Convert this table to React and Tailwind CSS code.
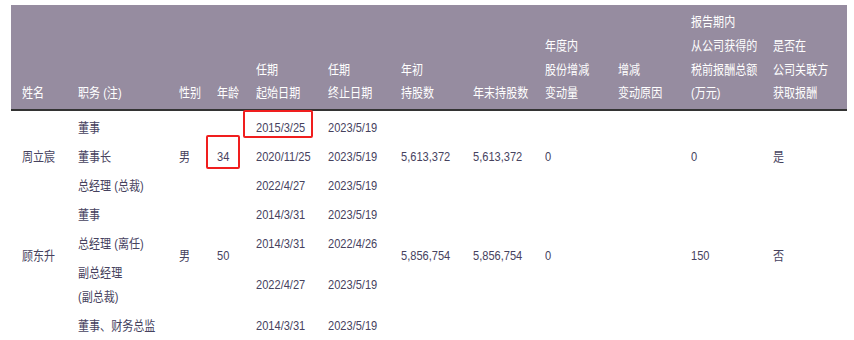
const cols = [67, 101, 38, 39, 72, 73, 72, 72, 73, 73, 82, 74]

const headers = [
  ['姓名'],
  ['职务 (注)'],
  ['性别'],
  ['年龄'],
  ['任期', '起始日期'],
  ['任期', '终止日期'],
  ['年初', '持股数'],
  ['年末持股数'],
  ['年度内', '股份增减', '变动量'],
  ['增减', '变动原因'],
  ['报告期内', '从公司获得的', '税前报酬总额', '(万元)'],
  ['是否在', '公司关联方', '获取报酬'],
]

// 中文单元格
function C({ children, rowSpan, className = '' }) {
  return (
    <td rowSpan={rowSpan} className={'p-0 align-middle text-[13px] ' + className}>
      <span className="inline-block origin-left scale-x-[0.85] whitespace-nowrap">{children}</span>
    </td>
  )
}

// 数字单元格（窄体）
function N({ children, rowSpan }) {
  return (
    <td rowSpan={rowSpan} className="p-0 align-middle text-[13.5px]">
      <span className="inline-block origin-left scale-x-[0.82] whitespace-nowrap">{children}</span>
    </td>
  )
}

function E({ rowSpan }) {
  return <td rowSpan={rowSpan} className="p-0" />
}

export default function App() {
  return (
    <div
      className="relative h-[340px] w-[854px] overflow-hidden bg-white pl-[11px] pt-[5px]"
      style={{ fontFamily: '"Liberation Sans","Noto Sans CJK SC",sans-serif' }}
    >
      <table className="table-fixed border-collapse text-[#46425e]" style={{ width: 836 }}>
        <colgroup>
          {cols.map((w, i) => (
            <col key={i} style={{ width: w }} />
          ))}
        </colgroup>
        <thead>
          <tr className="h-[104px] bg-[#968ca0] text-white">
            {headers.map((lines, i) => (
              <th
                key={i}
                className={
                  'p-0 pb-[4px] text-left align-bottom text-[13px] font-normal leading-[23.7px]' +
                  (i === 0 ? ' pl-[11px]' : '')
                }
              >
                <div className="origin-left scale-x-[0.85] whitespace-nowrap">
                  {lines.map((l, j) => (
                    <div key={j}>{l}</div>
                  ))}
                </div>
              </th>
            ))}
          </tr>
          <tr className="h-[2px] bg-[#333]">
            <td colSpan={12} className="p-0" />
          </tr>
          <tr className="h-[2.5px]">
            <td colSpan={12} className="p-0" />
          </tr>
        </thead>
        <tbody className="leading-[24px]">
          <tr className="h-[29px]">
            <C rowSpan={3} className="pl-[11px]">周立宸</C>
            <C>董事</C>
            <C rowSpan={3}>男</C>
            <N rowSpan={3}>34</N>
            <N>2015/3/25</N>
            <N>2023/5/19</N>
            <N rowSpan={3}>5,613,372</N>
            <N rowSpan={3}>5,613,372</N>
            <N rowSpan={3}>0</N>
            <E rowSpan={3} />
            <N rowSpan={3}>0</N>
            <C rowSpan={3}>是</C>
          </tr>
          <tr className="h-[29px]">
            <C>董事长</C>
            <N>2020/11/25</N>
            <N>2023/5/19</N>
          </tr>
          <tr className="h-[29px]">
            <C>总经理 (总裁)</C>
            <N>2022/4/27</N>
            <N>2023/5/19</N>
          </tr>

          <tr className="h-[29px]">
            <C rowSpan={3} className="pl-[11px]">顾东升</C>
            <C>董事</C>
            <C rowSpan={3}>男</C>
            <N rowSpan={3}>50</N>
            <N>2014/3/31</N>
            <N>2023/5/19</N>
            <N rowSpan={3}>5,856,754</N>
            <N rowSpan={3}>5,856,754</N>
            <N rowSpan={3}>0</N>
            <E rowSpan={3} />
            <N rowSpan={3}>150</N>
            <C rowSpan={3}>否</C>
          </tr>
          <tr className="h-[29px]">
            <C>总经理 (离任)</C>
            <N>2014/3/31</N>
            <N>2022/4/26</N>
          </tr>
          <tr className="h-[53px]">
            <C>
              副总经理
              <br />
              (副总裁)
            </C>
            <N>2022/4/27</N>
            <N>2023/5/19</N>
          </tr>

          <tr className="h-[29px]">
            <E />
            <C>董事、财务总监</C>
            <E />
            <E />
            <N>2014/3/31</N>
            <N>2023/5/19</N>
            <E />
            <E />
            <E />
            <E />
            <E />
            <E />
          </tr>
        </tbody>
      </table>

      <div className="absolute left-[243px] top-[110px] h-[28px] w-[70px] rounded-[2px] border-2 border-[#f01e1e]" />
      <div className="absolute left-[206px] top-[135px] h-[34px] w-[34px] rounded-[2px] border-2 border-[#f01e1e]" />
    </div>
  )
}
